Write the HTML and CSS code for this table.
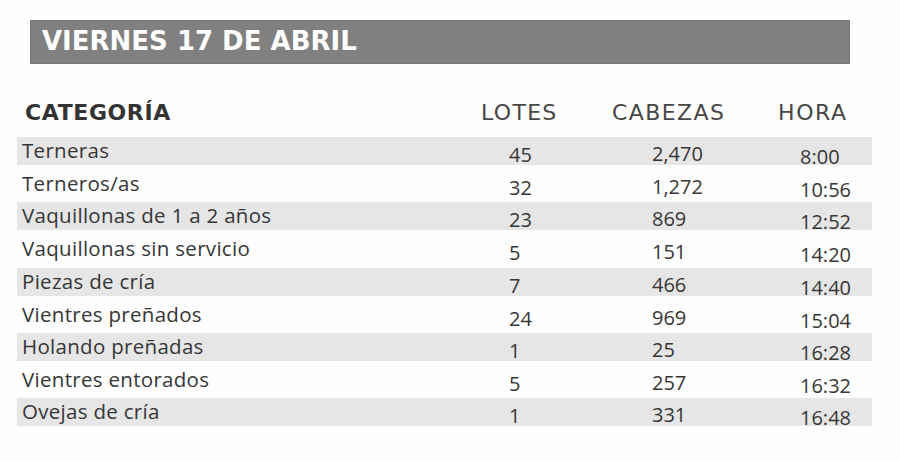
FILE: index.html
```html
<!DOCTYPE html>
<html lang="es">
<head>
<meta charset="utf-8">
<title>Viernes 17 de abril</title>
<link rel="stylesheet" href="styles.css">
</head>
<body>
<div class="page">
  <div class="title-bar"><h1 class="title">VIERNES 17 DE ABRIL</h1></div>
  <div class="head-row">
    <div class="c-cat h-cat">CATEGORÍA</div>
    <div class="h-lotes">LOTES</div>
    <div class="h-cab">CABEZAS</div>
    <div class="h-hora">HORA</div>
  </div>
  <div class="rows">
    <div class="row gray"><div class="c-cat">Terneras</div><div class="c-lotes">45</div><div class="c-cab">2,470</div><div class="c-hora">8:00</div></div>
    <div class="row white"><div class="c-cat">Terneros/as</div><div class="c-lotes">32</div><div class="c-cab">1,272</div><div class="c-hora">10:56</div></div>
    <div class="row gray"><div class="c-cat">Vaquillonas de 1 a 2 años</div><div class="c-lotes">23</div><div class="c-cab">869</div><div class="c-hora">12:52</div></div>
    <div class="row white"><div class="c-cat">Vaquillonas sin servicio</div><div class="c-lotes">5</div><div class="c-cab">151</div><div class="c-hora">14:20</div></div>
    <div class="row gray"><div class="c-cat">Piezas de cría</div><div class="c-lotes">7</div><div class="c-cab">466</div><div class="c-hora">14:40</div></div>
    <div class="row white"><div class="c-cat">Vientres preñados</div><div class="c-lotes">24</div><div class="c-cab">969</div><div class="c-hora">15:04</div></div>
    <div class="row gray"><div class="c-cat">Holando preñadas</div><div class="c-lotes">1</div><div class="c-cab">25</div><div class="c-hora">16:28</div></div>
    <div class="row white"><div class="c-cat">Vientres entorados</div><div class="c-lotes">5</div><div class="c-cab">257</div><div class="c-hora">16:32</div></div>
    <div class="row gray"><div class="c-cat">Ovejas de cría</div><div class="c-lotes">1</div><div class="c-cab">331</div><div class="c-hora">16:48</div></div>
  </div>
</div>
</body>
</html>
```
FILE: styles.css
```css
html, body {
  margin: 0;
  padding: 0;
  background: #fefefe;
}
.page {
  width: 900px;
  height: 461px;
  padding-top: 20px;
  box-sizing: border-box;
  color: #363636;
}
.title-bar {
  margin-left: 30px;
  width: 820px;
  height: 44px;
  background: #808080;
  box-sizing: border-box;
  border: 1px solid #777;
  padding-left: 11px;
  padding-bottom: 3px;
  display: flex;
  align-items: center;
}
.title {
  margin: 0;
  font-family: "DejaVu Sans", sans-serif;
  font-weight: 700;
  font-size: 26px;
  line-height: 30px;
  color: #fdfdfd;
}
.head-row {
  display: flex;
  margin-top: 35px;
  height: 38px;
  font-family: "DejaVu Sans", sans-serif;
  font-size: 22px;
  line-height: 28px;
  color: #474747;
}
.h-cat {
  padding-left: 25px;
  width: 456px;
  font-weight: 700;
  color: #333;
  letter-spacing: 0.6px;
}
.h-lotes { width: 131px; letter-spacing: 1.3px; }
.h-cab { width: 166px; letter-spacing: 1.4px; }
.h-hora { letter-spacing: 1.6px; }

.rows {
  margin-left: 17px;
  width: 855px;
}
.row {
  display: flex;
  align-items: flex-start;
  box-sizing: border-box;
  font-family: "Open Sans", sans-serif;
  line-height: 24px;
}
.row.gray {
  height: 28px;
  background: #e6e6e6;
  padding-top: 1px;
}
.row.white {
  height: 37.25px;
  padding-top: 6px;
}
.row .c-cat {
  width: 487px;
  padding-left: 5px;
  font-size: 20.5px;
  letter-spacing: 0.3px;
}
.c-lotes {
  width: 143px;
  font-size: 20px;
  padding-top: 5px;
}
.c-cab {
  width: 148px;
  font-size: 20px;
  padding-top: 4px;
}
.c-hora {
  font-size: 20px;
  padding-top: 7px;
}
```
